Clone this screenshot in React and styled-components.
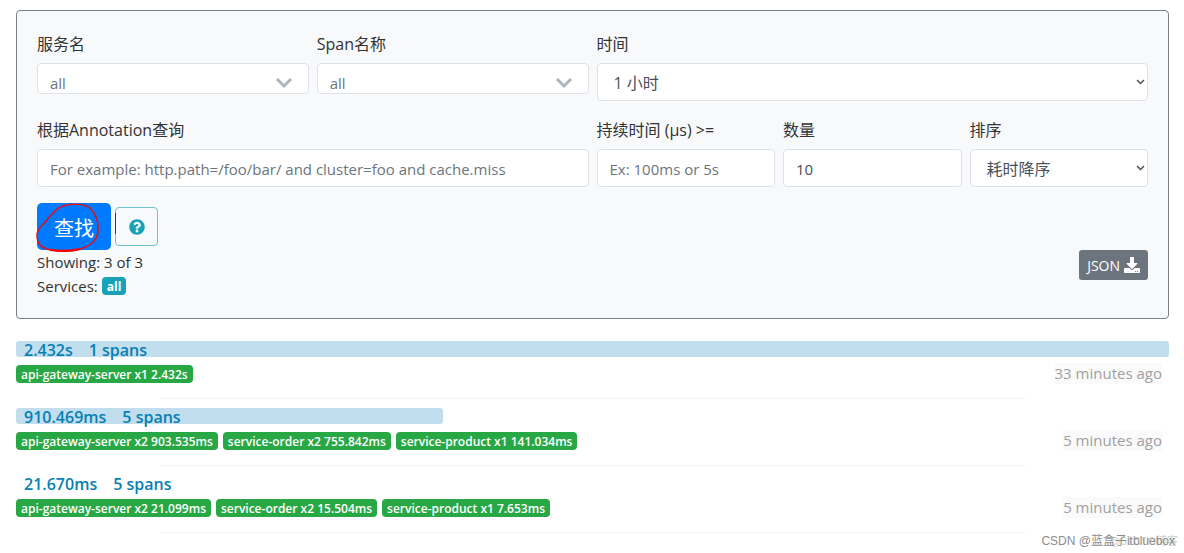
import React, { useState } from "react";
import styled, { createGlobalStyle } from "styled-components";
import { FaDownload, FaQuestionCircle } from "react-icons/fa";

const GlobalStyle = createGlobalStyle`
  * {
    box-sizing: border-box;
  }

  body {
    margin: 0;
    background-color: white;
    color: #212529;
    font-family: "Open Sans", "Noto Sans CJK SC", sans-serif;
    font-size: 16px;
    line-height: 24px;
  }
`;
const Container = styled.div`
  position: relative;
  padding: 10px 15px 0 16px;
  height: 100vh;
  overflow: hidden;
`;
const SearchPanel = styled.form`
  padding: 20px;
  border: 1px solid #7b7f83;
  border-radius: 4px;
  background-color: #f8f9fa;
`;
const FormGrid = styled.div`
  display: grid;
  grid-template-columns: repeat(12, 1fr);
  column-gap: 8px;
  row-gap: 16px;
`;
const Field = styled.div`
  display: flex;
  flex-direction: column;
  min-width: 0;
  grid-column: span ${(props) => props.$span};
`;
const Label = styled.label`
  padding-top: 1px;
  margin-bottom: 7px;
  color: #333;
  font-size: 16px;
`;
const TextInput = styled.input`
  width: 100%;
  height: 38px;
  padding: 7px 12px 6px;
  border: 1px solid #dee2e6;
  border-radius: 4px;
  background-color: white;
  color: #495057;
  font-family: inherit;
  font-size: 15px;

  &::placeholder {
    color: #6c757d;
    opacity: 1;
  }
`;
const SelectWrap = styled.div`
  position: relative;
`;
const Select = styled.select`
  display: block;
  width: 100%;
  height: ${(props) => (props.$short ? "31px" : "38px")};
  padding: ${(props) => (props.$short ? "8px 12px 0" : "2px 16px 0")};
  border: 1px solid #dee2e6;
  border-radius: 4px;
  background-color: white;
  color: ${(props) => (props.$short ? "#6c757d" : "#495057")};
  font-family: inherit;
  font-size: ${(props) => (props.$short ? "15px" : "16px")};
  appearance: none;
`;
const Chevron = styled.svg`
  position: absolute;
  top: ${(props) => (props.$large ? "14px" : "16px")};
  right: ${(props) => (props.$large ? "16px" : "3px")};
  width: ${(props) => (props.$large ? "18px" : "9px")};
  height: ${(props) => (props.$large ? "12px" : "6px")};
  fill: none;
  stroke: ${(props) => (props.$large ? "#adb5bd" : "#495057")};
  stroke-width: ${(props) => (props.$large ? 3 : 1.5)};
  pointer-events: none;
`;
const Actions = styled.div`
  display: flex;
  align-items: center;
  gap: 4px;
  margin-top: 16px;
`;
const FindButton = styled.button`
  position: relative;
  width: 74px;
  height: 47px;
  padding: 2px 0 0;
  border: none;
  border-radius: 5px;
  background-color: #007bff;
  color: white;
  font-family: inherit;
  font-size: 20px;
  cursor: pointer;
`;
const PenMark = styled.svg`
  position: absolute;
  top: -1px;
  left: -1px;
  width: 84px;
  height: 52px;
  fill: none;
  pointer-events: none;
`;
const HelpButton = styled.button`
  display: flex;
  align-items: center;
  justify-content: center;
  width: 43px;
  height: 39px;
  padding: 0;
  border: 1px solid #6cc4cf;
  border-radius: 4px;
  background-color: transparent;
  color: #17a2b8;
  font-size: 16px;
  cursor: pointer;
`;
const Summary = styled.div`
  display: flex;
  align-items: flex-start;
  justify-content: space-between;
  color: #333;
  font-size: 15px;
`;
const ServicesLine = styled.div`
  display: flex;
  align-items: center;
  gap: 4px;
`;
const JsonButton = styled.button`
  display: flex;
  align-items: center;
  gap: 4px;
  height: 30px;
  padding: 0 8px;
  border: none;
  border-radius: 3px;
  background-color: #6c757d;
  color: white;
  font-family: inherit;
  font-size: 14px;
  cursor: pointer;

  svg {
    width: 16px;
    height: 16px;
  }
`;
const Badge = styled.span`
  padding: 1px 5px 0;
  border-radius: 4px;
  background-color: ${(props) => (props.$info ? "#17a2b8" : "#28a745")};
  color: white;
  font-size: 12px;
  font-weight: ${(props) => (props.$info ? 700 : 600)};
  line-height: 17px;
  white-space: nowrap;
`;
const TraceList = styled.div`
  margin-top: 22px;
`;
const TraceBar = styled.div`
  width: ${(props) => props.$percent}%;
  height: 16px;
  border-radius: 3px;
  background-color: #c0deed;
`;
const TraceTitle = styled.div`
  display: flex;
  gap: 16px;
  padding-left: 8px;
  color: #0780b3;
  font-size: 16px;
  font-weight: 600;
  line-height: 18px;
  white-space: nowrap;
`;
const TraceInfo = styled.div`
  display: flex;
  align-items: center;
  justify-content: space-between;
  height: 24px;
  margin-top: 4px;
  padding-right: 7px;
`;
const Badges = styled.div`
  display: flex;
  gap: 5px;
  padding-top: 2px;
`;
const TimeAgo = styled.span`
  background-color: #fafafa;
  color: #a0a0a0;
  font-size: 15px;
  line-height: 21px;
`;
const Divider = styled.hr`
  width: 75%;
  height: 1px;
  margin: 13px auto 9px;
  border: none;
  background-color: #f2f2f2;
`;
const Watermark = styled.div`
  position: absolute;
  right: ${(props) => (props.$faint ? "6px" : "9px")};
  bottom: 2px;
  color: ${(props) => (props.$faint ? "#d0d0d0" : "#8c8c8c")};
  font-family: "Liberation Sans", "Noto Sans CJK SC", sans-serif;
  font-size: ${(props) => (props.$faint ? "11px" : "12px")};
  line-height: 20px;
`;

const traces = [
  {
    duration: "2.432s",
    spans: 1,
    percent: 100,
    time: "33 minutes ago",
    services: ["api-gateway-server x1 2.432s"],
  },
  {
    duration: "910.469ms",
    spans: 5,
    percent: 37,
    time: "5 minutes ago",
    services: [
      "api-gateway-server x2 903.535ms",
      "service-order x2 755.842ms",
      "service-product x1 141.034ms",
    ],
  },
  {
    duration: "21.670ms",
    spans: 5,
    percent: 0,
    time: "5 minutes ago",
    services: [
      "api-gateway-server x2 21.099ms",
      "service-order x2 15.504ms",
      "service-product x1 7.653ms",
    ],
  },
];

function SelectField({ id, label, span, option, short }) {
  return (
    <Field $span={span}>
      <Label htmlFor={id}>{label}</Label>
      <SelectWrap>
        <Select id={id} $short={short}>
          <option>{option}</option>
        </Select>
        {short ? (
          <Chevron $large viewBox="0 0 18 12">
            <path d="M2 2l7 7 7-7" />
          </Chevron>
        ) : (
          <Chevron viewBox="0 0 9 6">
            <path d="M1 1l3.5 3.5L8 1" />
          </Chevron>
        )}
      </SelectWrap>
    </Field>
  );
}

function App() {
  const [annotation, setAnnotation] = useState("");
  const [minDuration, setMinDuration] = useState("");
  const [limit, setLimit] = useState("10");

  return (
    <Container>
      <GlobalStyle />
      <SearchPanel onSubmit={(e) => e.preventDefault()}>
        <FormGrid>
          <SelectField id="serviceName" label="服务名" span={3} option="all" short />
          <SelectField id="spanName" label="Span名称" span={3} option="all" short />
          <SelectField id="lookback" label="时间" span={6} option="1 小时" />
          <Field $span={6}>
            <Label htmlFor="annotation">根据Annotation查询</Label>
            <TextInput
              id="annotation"
              placeholder="For example: http.path=/foo/bar/ and cluster=foo and cache.miss"
              value={annotation}
              onChange={(e) => setAnnotation(e.target.value)}
            />
          </Field>
          <Field $span={2}>
            <Label htmlFor="minDuration">持续时间 (μs) &gt;=</Label>
            <TextInput
              id="minDuration"
              placeholder="Ex: 100ms or 5s"
              value={minDuration}
              onChange={(e) => setMinDuration(e.target.value)}
            />
          </Field>
          <Field $span={2}>
            <Label htmlFor="limit">数量</Label>
            <TextInput
              id="limit"
              value={limit}
              onChange={(e) => setLimit(e.target.value)}
            />
          </Field>
          <SelectField id="sortOrder" label="排序" span={2} option="耗时降序" />
        </FormGrid>
        <Actions>
          <FindButton type="submit">
            查找
            <PenMark viewBox="0 0 84 52">
              <path
                stroke="#e0101c"
                strokeWidth="1.5"
                d="M27 4C19 7 16 12 11 18C6 24 1 27 1 33C1 42 5 46 15 48C24 50 38 50 47 46C56 43 61 38 62 30C63 21 60 12 54 6C49 2 35 1 27 4"
              />
              <path stroke="#f00" strokeWidth="2" d="M14 48C24 49 35 49 44 47" />
              <path stroke="#1d4348" strokeWidth="1" d="M79.5 11v21" />
            </PenMark>
          </FindButton>
          <HelpButton type="button" aria-label="Help">
            <FaQuestionCircle />
          </HelpButton>
        </Actions>
        <Summary>
          <div>
            <div>Showing: 3 of 3</div>
            <ServicesLine>
              Services: <Badge $info>all</Badge>
            </ServicesLine>
          </div>
          <JsonButton type="button">
            JSON <FaDownload />
          </JsonButton>
        </Summary>
      </SearchPanel>
      <TraceList>
        {traces.map((trace) => (
          <div key={trace.duration}>
            <TraceBar $percent={trace.percent}>
              <TraceTitle>
                <span>{trace.duration}</span>
                <span>{trace.spans} spans</span>
              </TraceTitle>
            </TraceBar>
            <TraceInfo>
              <Badges>
                {trace.services.map((service) => (
                  <Badge key={service}>{service}</Badge>
                ))}
              </Badges>
              <TimeAgo>{trace.time}</TimeAgo>
            </TraceInfo>
            <Divider />
          </div>
        ))}
      </TraceList>
      <Watermark $faint>@51CTO博客</Watermark>
      <Watermark>CSDN @蓝盒子itbluebox</Watermark>
    </Container>
  );
}

export default App;
